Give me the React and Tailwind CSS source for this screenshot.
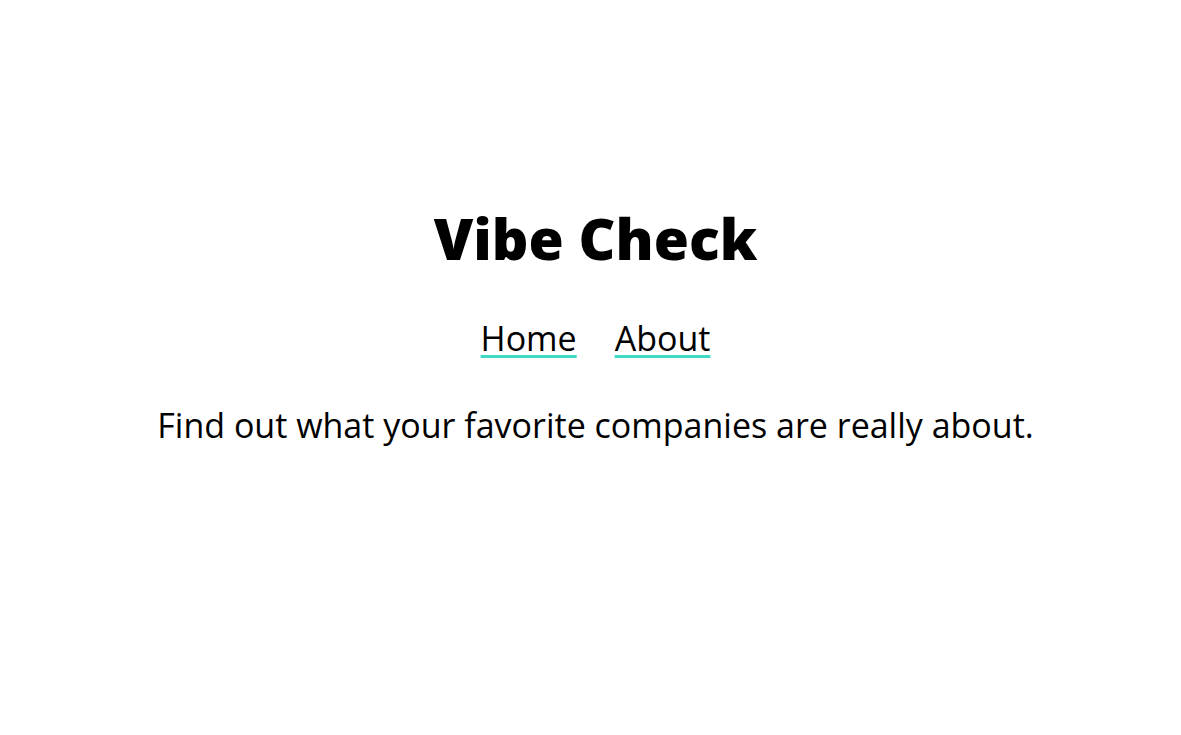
export default function App() {
  return (
    <div className="min-h-screen bg-white text-black font-['Open_Sans',sans-serif] flex flex-col items-center pt-[196px] pl-[10px]">
      <h1 className="text-[57px] font-extrabold leading-[84px]">Vibe Check</h1>
      <nav className="mt-[35px] flex gap-[38px] text-[34px] leading-[46px]">
        <a href="#" className="underline decoration-[#3dd9c5] decoration-[3px] underline-offset-[4px]">Home</a>
        <a href="#" className="underline decoration-[#3dd9c5] decoration-[3px] underline-offset-[4px]">About</a>
      </nav>
      <p className="mt-[41px] text-[34px] leading-[46px]">Find out what your favorite companies are really about.</p>
    </div>
  )
}
